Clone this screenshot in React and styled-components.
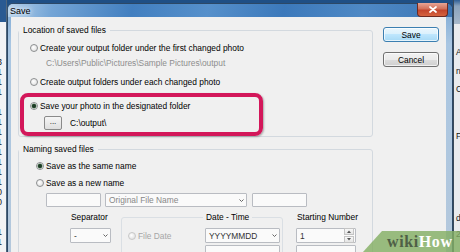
import React from "react";
import styled, { createGlobalStyle } from "styled-components";

const GlobalStyle = createGlobalStyle`
  html, body { margin: 0; padding: 0; }
  body {
    width: 460px;
    height: 252px;
    overflow: hidden;
    font-family: "Liberation Sans", Arial, sans-serif;
  }
`;

const leftDigits = ["3", "1", "1", "1", "", "1", "1", "1", "1", "1", "1", "1", "1", "0", "0", ".", "", "1", "1"];
const rightCells = [
  { text: "A", mt: 47 },
  { text: "n", mt: 9 },
  { text: "Cu", mt: 8 },
  { text: "Fr", mt: 37 },
  { text: "dt", mt: 72 },
  { text: "20", mt: 6 },
];

const Chevron = () => (
  <svg width="5" height="3" viewBox="0 0 5 3">
    <path d="M0.5 0.5 L2.5 2.5 L4.5 0.5" fill="none" stroke="#666" strokeWidth="1" />
  </svg>
);

const CloseGlyph = () => (
  <svg width="8" height="7" viewBox="0 0 8 7">
    <path d="M1 1 L7 6 M7 1 L1 6" stroke="#fff" strokeWidth="1.7" strokeLinecap="round" />
  </svg>
);

const SpinArrow = ({ up }) => (
  <svg width="4" height="3" viewBox="0 0 4 3">
    <path d={up ? "M0 3 L2 0.5 L4 3 Z" : "M0 0 L2 2.5 L4 0 Z"} fill="#555" />
  </svg>
);

function Radio({ checked, disabled, children, mt, ml }) {
  return (
    <RadioRow $mt={mt} $ml={ml} $disabled={disabled}>
      <RadioDot $checked={checked} $disabled={disabled} />
      {children}
    </RadioRow>
  );
}

export default function App() {
  return (
    <Screen>
      <GlobalStyle />
      <LeftApp>
        {leftDigits.map((d, i) => (
          <Digit key={i}>{d}</Digit>
        ))}
      </LeftApp>

      <Window>
        <TitleBar>
          <TitleText>Save</TitleText>
          <CloseButton>
            <CloseGlyph />
          </CloseButton>
        </TitleBar>

        <Client>
          <Main>
            <Group>
              <Legend>Location of saved files</Legend>
              <Radio mt={7} ml={11}>Create your output folder under the first changed photo</Radio>
              <PathText>C:\Users\Public\Pictures\Sample Pictures\output</PathText>
              <Radio mt={8} ml={11}>Create output folders under each changed photo</Radio>
              <RedBox>
                <Radio checked mt={3} ml={6}>Save your photo in the designated folder</Radio>
                <BrowseRow>
                  <BrowseButton>...</BrowseButton>
                  <span>C:\output\</span>
                </BrowseRow>
              </RedBox>
            </Group>

            <Group $mt={7}>
              <Legend>Naming saved files</Legend>
              <Radio checked mt={6} ml={17}>Save as the same name</Radio>
              <Radio mt={6} ml={17}>Save as a new name</Radio>
              <InputRow>
                <Field $w={55} />
                <Field $w={142} $ml={4}>
                  <Placeholder>Original File Name</Placeholder>
                  <Chevron />
                </Field>
                <Field $w={55} $ml={5} />
              </InputRow>

              <BottomRow>
                <Column $w={41}>
                  <ColLabel>Separator</ColLabel>
                  <Field $w={41} $h={15} $mt={5}>
                    <span>-</span>
                    <Chevron />
                  </Field>
                </Column>

                <DateGroup>
                  <Legend $ml={81} $pad={3} $lh={11}>Date - Time</Legend>
                  <DateRow>
                    <Radio disabled mt={0} ml={6}>File Date</Radio>
                    <Field $w={75} $h={15} $ml="auto">
                      <span>YYYYMMDD</span>
                      <Chevron />
                    </Field>
                  </DateRow>
                  <DateRow $mt={2}>
                    <Field $w={75} $h={15} $ml="auto" />
                  </DateRow>
                </DateGroup>

                <Column $w={60} $ml={13}>
                  <ColLabel>Starting Number</ColLabel>
                  <Field $w={60} $h={15} $mt={5}>
                    <span>1</span>
                    <Spinner>
                      <SpinButton><SpinArrow up /></SpinButton>
                      <SpinButton><SpinArrow /></SpinButton>
                    </Spinner>
                  </Field>
                  <Field $w={60} $h={15} $mt={2} />
                </Column>
              </BottomRow>
            </Group>
          </Main>

          <ButtonColumn>
            <DialogButton $default>Save</DialogButton>
            <DialogButton>Cancel</DialogButton>
          </ButtonColumn>
        </Client>
      </Window>

      <RightApp>
        {rightCells.map((c) => (
          <AppCell key={c.text} $mt={c.mt}>
            {c.text}
          </AppCell>
        ))}
      </RightApp>

      <Watermark>
        <WikiText>wiki</WikiText>
        <HowText>How</HowText>
      </Watermark>
    </Screen>
  );
}

const Screen = styled.div`
  position: relative;
  display: flex;
  width: 460px;
  height: 252px;
  overflow: hidden;
  background: #1f4f85;
`;

const LeftApp = styled.div`
  width: 7px;
  flex-shrink: 0;
  box-sizing: border-box;
  display: flex;
  flex-direction: column;
  padding-top: 57px;
  overflow: hidden;
  border-right: 1px solid #50667c;
  background: linear-gradient(#2a5a92 0, #2a5a92 22px, #f2f3f5 22px);
`;

const Digit = styled.div`
  height: 10px;
  margin-left: -3px;
  font-size: 9px;
  line-height: 10px;
  color: #222;
`;

const Window = styled.div`
  width: 446px;
  flex-shrink: 0;
  margin-top: 3px;
  box-sizing: border-box;
  display: flex;
  flex-direction: column;
  padding: 0 6px 0 3px;
  border: 1px solid #2c4866;
  border-bottom: 0;
  border-radius: 6px 6px 0 0;
  background: linear-gradient(to bottom, #7aa7d4, #a9c6e2 40px, #b4c8dc);
`;

const TitleBar = styled.div`
  height: 18px;
  display: flex;
  align-items: center;
  justify-content: space-between;
  margin: 0 -6px 0 -3px;
  padding: 0 4px 0 2px;
  border-radius: 5px 5px 0 0;
  background: linear-gradient(
    100deg,
    #b3d0ea 0%,
    #74a5d6 10%,
    #427fc0 28%,
    #5690cb 45%,
    #3c79bb 62%,
    #4f89c5 80%,
    #3b75b4 100%
  );
`;

const TitleText = styled.span`
  font-size: 9px;
  color: #000;
  text-shadow: 0 0 4px #fff, 0 0 6px #fff;
`;

const CloseButton = styled.div`
  align-self: flex-start;
  margin-top: -1px;
  width: 31px;
  height: 14px;
  box-sizing: border-box;
  display: flex;
  align-items: center;
  justify-content: center;
  border: 1px solid #6e2a22;
  border-top: 0;
  border-radius: 0 0 4px 4px;
  background: linear-gradient(#e7a595, #d0705a 45%, #c2452c 55%, #d6633f);
`;

const Client = styled.div`
  flex: 1;
  display: flex;
  padding: 8px 0 0 7px;
  background: #f0f0f0;
`;

const Main = styled.div`
  width: 355px;
  display: flex;
  flex-direction: column;
`;

const Group = styled.fieldset`
  margin: ${(p) => p.$mt || 0}px 0 0;
  padding: 0;
  min-width: 0;
  border: 1px solid #d3d9df;
  border-radius: 3px;
`;

const Legend = styled.legend`
  margin-left: ${(p) => p.$ml || 0}px;
  padding: 0 ${(p) => (p.$pad === undefined ? 4 : p.$pad)}px;
  font-size: 8.4px;
  line-height: ${(p) => p.$lh || 10}px;
  color: #000;
`;

const RadioRow = styled.div`
  height: 11px;
  display: flex;
  align-items: center;
  gap: 2px;
  margin: ${(p) => p.$mt}px 0 0 ${(p) => p.$ml}px;
  font-size: 8.4px;
  white-space: nowrap;
  color: ${(p) => (p.$disabled ? "#a6a6a6" : "#000")};
`;

const RadioDot = styled.span`
  width: 8px;
  height: 8px;
  flex-shrink: 0;
  box-sizing: border-box;
  border-radius: 50%;
  border: 1px solid ${(p) => (p.$disabled ? "#c8c8c8" : "#8c8e90")};
  background: ${(p) =>
    p.$checked
      ? "radial-gradient(circle, #1d3a25 0 1.5px, #5c8663 2.2px, #f2f2f2 2.8px, #d6d6d6)"
      : "radial-gradient(circle at 40% 40%, #ffffff, #d9d9d9)"};
`;

const PathText = styled.div`
  margin: 5px 0 0 27px;
  font-size: 8.4px;
  line-height: 10px;
  color: #8e8e8e;
`;

const RedBox = styled.div`
  width: 243px;
  height: 43px;
  margin: 6px 0 0 1px;
  box-sizing: border-box;
  display: flex;
  flex-direction: column;
  border: 4px solid #d3175a;
  border-radius: 8px;
  box-shadow: 1px 1px 2px rgba(0, 0, 0, 0.3);
`;

const BrowseRow = styled.div`
  display: flex;
  align-items: center;
  gap: 8px;
  margin: 5px 0 0 20px;
  font-size: 8.4px;
  color: #000;
`;

const BrowseButton = styled.div`
  width: 18px;
  height: 14px;
  box-sizing: border-box;
  display: flex;
  align-items: flex-end;
  justify-content: center;
  padding-bottom: 3px;
  border: 1px solid #8a8a8a;
  border-radius: 2px;
  background: linear-gradient(#f6f6f6, #dedede);
  font-size: 8px;
  line-height: 8px;
`;

const InputRow = styled.div`
  display: flex;
  margin: 5px 0 0 27px;
`;

const Field = styled.div`
  width: ${(p) => p.$w}px;
  height: ${(p) => p.$h || 14}px;
  margin-left: ${(p) => (p.$ml === "auto" ? "auto" : `${p.$ml || 0}px`)};
  margin-top: ${(p) => p.$mt || 0}px;
  flex-shrink: 0;
  box-sizing: border-box;
  display: flex;
  align-items: center;
  justify-content: space-between;
  padding: 0 2px 0 3px;
  border: 1px solid #b9bcc2;
  border-radius: 1px;
  background: #fafafa;
  font-size: 8.4px;
  color: #333;
`;

const Placeholder = styled.span`
  color: #888;
`;

const BottomRow = styled.div`
  display: flex;
  align-items: flex-start;
  margin: 5px 0 0 51px;
`;

const Column = styled.div`
  width: ${(p) => p.$w}px;
  margin-left: ${(p) => p.$ml || 0}px;
  display: flex;
  flex-direction: column;
`;

const ColLabel = styled.div`
  padding-left: 1px;
  font-size: 8.4px;
  line-height: 11px;
  white-space: nowrap;
  color: #000;
`;

const DateGroup = styled.fieldset`
  width: 162px;
  margin: 0 0 0 10px;
  padding: 0;
  min-width: 0;
  box-sizing: border-box;
  border: 1px solid #dadfe4;
  border-radius: 3px;
`;

const DateRow = styled.div`
  height: 15px;
  display: flex;
  align-items: center;
  margin-top: ${(p) => (p.$mt === undefined ? 5 : p.$mt)}px;
  padding-right: 2px;
`;

const Spinner = styled.div`
  display: flex;
  flex-direction: column;
  gap: 1px;
  margin-right: -1px;
`;

const SpinButton = styled.div`
  width: 8px;
  height: 5px;
  display: flex;
  align-items: center;
  justify-content: center;
  border: 1px solid #c4c4c4;
  background: linear-gradient(#f8f8f8, #e4e4e4);
`;

const ButtonColumn = styled.div`
  display: flex;
  flex-direction: column;
  gap: 10px;
  margin: 2px 0 0 10px;
`;

const DialogButton = styled.div`
  width: 56px;
  height: 15px;
  box-sizing: border-box;
  display: flex;
  align-items: center;
  justify-content: center;
  border-radius: 3px;
  font-size: 8.4px;
  color: #000;
  border: 1px solid ${(p) => (p.$default ? "#3c7fb1" : "#707070")};
  background: ${(p) =>
    p.$default
      ? "linear-gradient(#eaf6fd 0, #d9f0fc 50%, #bee6fd 50%, #a7d9f5)"
      : "linear-gradient(#f2f2f2 0, #ebebeb 50%, #dddddd 50%, #cfcfcf)"};
  box-shadow: inset 0 0 0 1px rgba(255, 255, 255, 0.7);
`;

const RightApp = styled.div`
  width: 7px;
  flex-shrink: 0;
  box-sizing: border-box;
  display: flex;
  flex-direction: column;
  overflow: hidden;
  padding-left: 2px;
  border-left: 1px solid #3a4a5a;
  background: linear-gradient(#2f5f96 0, #8aa3bd 6px, #a7b8ca 24px, #e9ebee 24px);
`;

const AppCell = styled.div`
  margin-top: ${(p) => p.$mt}px;
  font-size: 8.4px;
  line-height: 10px;
  white-space: nowrap;
  color: #111;
`;

const Watermark = styled.div`
  position: absolute;
  right: 0;
  bottom: 0;
  width: 97px;
  height: 21px;
  display: flex;
  align-items: center;
  padding-left: 24px;
  box-sizing: border-box;
  clip-path: polygon(19px 0, 100% 0, 100% 100%, 0 100%);
  background: rgba(132, 175, 100, 0.82);
  font-family: "Liberation Serif", "Times New Roman", serif;
  font-weight: bold;
  font-size: 16px;
  letter-spacing: 0.6px;
`;

const WikiText = styled.span`
  color: #4f5f46;
`;

const HowText = styled.span`
  color: #fff;
`;
